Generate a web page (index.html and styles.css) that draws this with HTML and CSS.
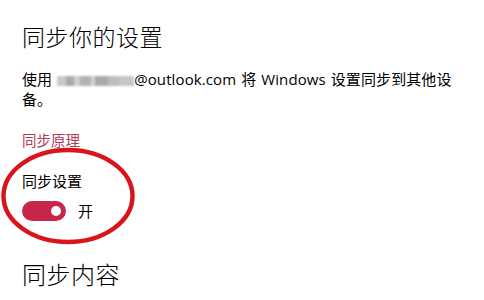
FILE: index.html
```html
<!DOCTYPE html>
<html lang="zh-CN">
<head>
<meta charset="utf-8">
<title>同步你的设置</title>
<link rel="stylesheet" href="styles.css">
</head>
<body>
<main class="page">
  <h1 class="title">同步你的设置</h1>
  <p class="desc">使用 <span class="blur"></span>@outlook.com 将 Windows 设置同步到其他设备。</p>
  <a class="link" href="#">同步原理</a>
  <div class="label">同步设置</div>
  <div class="toggle-row">
    <span class="toggle"><span class="knob"></span></span>
    <span class="state">开</span>
  </div>
  <h2 class="title section">同步内容</h2>
  <svg class="circle" width="140" height="104" viewBox="0 0 140 104" aria-hidden="true">
    <ellipse cx="68" cy="50" rx="64.5" ry="46" fill="none" stroke="#d9151b" stroke-width="4.5"/>
  </svg>
</main>
</body>
</html>
```

FILE: styles.css
```css
html, body {
  margin: 0;
  padding: 0;
  background: #ffffff;
}
.page {
  position: relative;
  display: flex;
  flex-direction: column;
  align-items: flex-start;
  padding: 20px 14px 0 22px;
  height: 300px;
  box-sizing: border-box;
  overflow: hidden;
  font-family: "Open Sans", "Noto Sans CJK SC", sans-serif;
  color: #000;
}
.title {
  margin: 0;
  font-family: "Noto Sans CJK SC", sans-serif;
  font-weight: 300;
  font-size: 23px;
  line-height: 32px;
  letter-spacing: 0.5px;
}
.desc {
  margin: 17px 0 0;
  font-size: 15px;
  line-height: 20px;
  max-width: 441px;
  letter-spacing: 0.1px;
  word-spacing: 1px;
}
.blur {
  display: inline-block;
  vertical-align: -1px;
  width: 77px;
  height: 10px;
  background: linear-gradient(90deg, #c8c8c8 0 12%, #aaaaaa 12% 22%, #cfcfcf 22% 30%, #b3b3b3 30% 44%, #d2d2d2 44% 50%, #a9a9a9 50% 66%, #bdbdbd 66% 80%, #c6c6c6 80% 100%);
  filter: blur(1px);
}
.link {
  margin-top: 21px;
  font-family: "Noto Sans CJK SC", sans-serif;
  font-size: 14.5px;
  line-height: 20px;
  color: #b13b56;
  text-decoration: none;
}
.label {
  margin-top: 21px;
  font-family: "Noto Sans CJK SC", sans-serif;
  font-size: 15px;
  line-height: 20px;
}
.toggle-row {
  margin-top: 10px;
  display: flex;
  align-items: center;
  gap: 12px;
}
.toggle {
  width: 44px;
  height: 20px;
  border-radius: 10px;
  background: #c7264a;
  display: flex;
  align-items: center;
  justify-content: flex-end;
  padding-right: 5px;
  box-sizing: border-box;
}
.knob {
  width: 10px;
  height: 10px;
  border-radius: 50%;
  background: #fff;
}
.state {
  font-family: "Noto Sans CJK SC", sans-serif;
  font-size: 15px;
  line-height: 20px;
}
.section {
  margin-top: 37px;
  font-size: 24px;
}
.circle {
  position: absolute;
  left: 0;
  top: 146px;
}
```
